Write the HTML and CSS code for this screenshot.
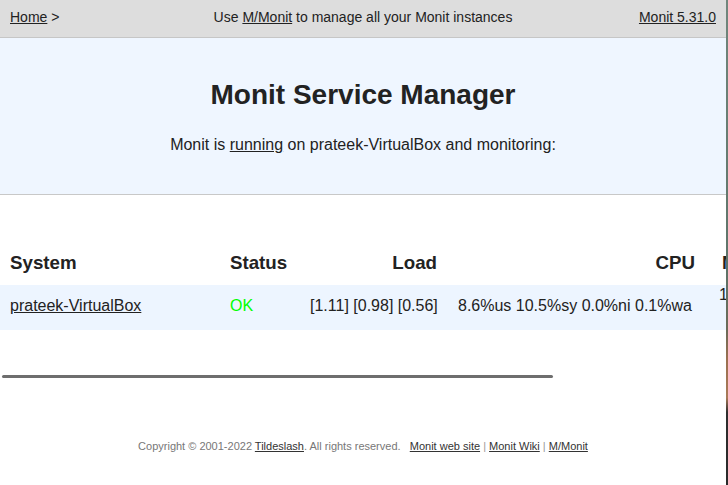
FILE: index.html
```html
<!DOCTYPE html>
<html>
<head>
<meta charset="utf-8">
<title>Monit: prateek-VirtualBox</title>
<link rel="stylesheet" href="styles.css">
</head>
<body>
<div class="screen">
  <div class="page">
    <div class="nav">
      <div class="nav-left"><a href="#">Home</a>&nbsp;&gt;</div>
      <div class="nav-center">Use <a href="#">M/Monit</a> to manage all your Monit instances</div>
      <div class="nav-right"><a href="#">Monit 5.31.0</a></div>
    </div>
    <div class="hero">
      <h1 class="title">Monit Service Manager</h1>
      <p class="subtitle">Monit is <a href="#">running</a> on prateek-VirtualBox and monitoring:</p>
    </div>
    <div class="main">
      <table class="status-table">
        <colgroup>
          <col class="c-system"><col class="c-status"><col class="c-load"><col class="c-cpu"><col class="c-mem"><col class="c-swap">
        </colgroup>
        <thead>
          <tr>
            <th class="left">System</th>
            <th class="left">Status</th>
            <th class="right">Load</th>
            <th class="right">CPU</th>
            <th class="left mem-h">Memory</th>
            <th class="right">Swap</th>
          </tr>
        </thead>
        <tbody>
          <tr class="stripe">
            <td class="left"><a href="#">prateek-VirtualBox</a></td>
            <td class="left ok">OK</td>
            <td class="right">[1.11]&nbsp;[0.98]&nbsp;[0.56]</td>
            <td class="left cpu-d">8.6%us 10.5%sy 0.0%ni 0.1%wa</td>
            <td class="left mem-d">14.7% [1.1 GB]</td>
            <td class="right">0.0% [0 B]</td>
          </tr>
        </tbody>
      </table>
      <div class="hscroll"><div class="thumb"></div></div>
    </div>
    <div class="footer">
      Copyright © 2001-2022 <a href="#">Tildeslash</a>. All rights reserved. &nbsp;&nbsp;<a href="#">Monit web site</a> <span class="sep">|</span> <a href="#">Monit Wiki</a> <span class="sep">|</span> <a href="#">M/Monit</a>
    </div>
  </div>
  <div class="edge"></div>
</div>
</body>
</html>
```

FILE: styles.css
```css
html, body {
  margin: 0;
  padding: 0;
  height: 485px;
  overflow: hidden;
}

body {
  background: #ffffff;
  color: #222222;
  font-family: "Liberation Sans", Arial, Helvetica, sans-serif;
  font-size: 16px;
}

a {
  color: #222222;
  text-decoration: underline;
}

.screen {
  display: flex;
  width: 728px;
  height: 485px;
}

.page {
  width: 726px;
  flex: 0 0 726px;
  overflow: hidden;
  background: #ffffff;
}

.edge {
  flex: 0 0 2px;
  background: linear-gradient(to bottom, #70867c 0%, #5e7469 55%, #6a6a58 68%, #9a7050 74%, #a87a58 82%, #2e2e2e 85%, #2a2a2a 100%);
}

/* Navigation bar */
.nav {
  display: grid;
  grid-template-columns: 1fr auto 1fr;
  align-items: start;
  height: 16px;
  padding: 9px 10px 12px;
  background: #dddddd;
  border-bottom: 1px solid #c6c6c6;
  font-size: 14px;
  line-height: 16px;
}

.nav-left { text-align: left; }
.nav-center { text-align: center; }
.nav-right { text-align: right; }

/* Header block */
.hero {
  background: #eff6ff;
  border-bottom: 1px solid #c8c8c8;
  padding: 41px 0 40px;
  text-align: center;
}

.title {
  margin: 0;
  font-size: 28px;
  line-height: 32px;
  font-weight: bold;
  color: #222222;
}

.subtitle {
  margin: 25px 0 0;
  font-size: 16px;
  line-height: 18px;
}

/* Main status table */
.main {
  width: 726px;
  overflow: hidden;
  padding-top: 46px;
}

.status-table {
  border-collapse: collapse;
  border: 0;
  table-layout: fixed;
  width: 1140px;
}

.c-system { width: 220px; }
.c-status { width: 80px; }
.c-load { width: 147px; }
.c-cpu { width: 258px; }
.c-mem { width: 235px; }
.c-swap { width: 200px; }

.status-table th {
  font-size: 18.72px;
  line-height: 24px;
  font-weight: bold;
  padding: 10px 10px 10px;
  white-space: nowrap;
  vertical-align: top;
}

.status-table td {
  height: 20px;
  font-size: 16px;
  line-height: 20px;
  padding: 11px 10px 14px;
  white-space: nowrap;
  vertical-align: top;
}

.stripe {
  background: #edf5ff;
}

.left { text-align: left; }
.right { text-align: right; }

.ok { color: #00ff00; }

.status-table td.cpu-d { padding-left: 11px; }

.status-table th.mem-h { padding-left: 17px; }

.status-table td.mem-d {
  padding-top: 0;
  padding-left: 14px;
}

/* Horizontal scrollbar of the overflowing table */
.hscroll {
  margin-top: 45px;
  height: 3px;
}

.thumb {
  width: 551px;
  height: 3px;
  margin-left: 2px;
  border-radius: 1.5px;
  background: #6e6e6e;
}

/* Footer */
.footer {
  margin-top: 62px;
  font-size: 11px;
  line-height: 13px;
  color: #777777;
  text-align: center;
}

.footer a {
  color: #333333;
}

.sep {
  color: #999999;
}
```
